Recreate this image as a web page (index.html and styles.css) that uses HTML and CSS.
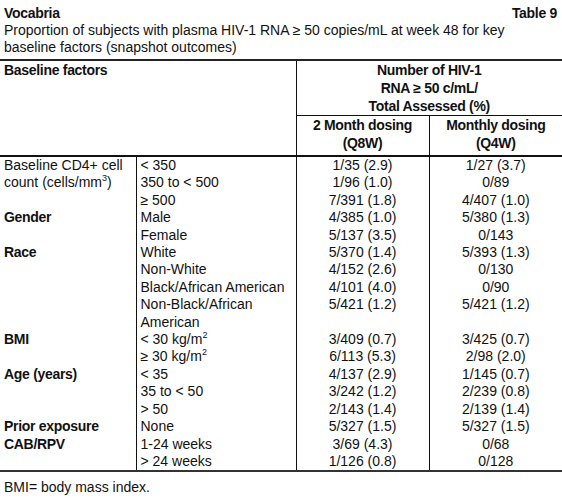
FILE: index.html
```html
<!DOCTYPE html>
<html>
<head>
    <meta charset="UTF-8">
    <link rel="stylesheet" href="styles.css">
</head>
<body>
    <div class="caption">
        <div class="caption-top">
            <span class="product">Vocabria</span>
            <span class="table-no">Table 9</span>
        </div>
        <div class="caption-text">Proportion of subjects with plasma HIV-1 RNA ≥ 50 copies/mL at week 48 for key<br>baseline factors (snapshot outcomes)</div>
    </div>

    <table class="results">
        <colgroup>
            <col class="c-factor">
            <col class="c-sub">
            <col class="c-q8w">
            <col class="c-q4w">
        </colgroup>
        <thead>
            <tr>
                <th colspan="2" rowspan="2" class="h-factor">Baseline factors</th>
                <th colspan="2" class="h-group">Number of HIV-1<br>RNA ≥ 50 c/mL/<br>Total Assessed (%)</th>
            </tr>
            <tr>
                <th class="h-arm">2 Month dosing<br>(Q8W)</th>
                <th class="h-arm">Monthly dosing<br>(Q4W)</th>
            </tr>
        </thead>
        <tbody>
            <tr>
                <td class="factor plain" rowspan="3">Baseline CD4+ cell<br>count (cells/mm<sup>3</sup>)</td>
                <td class="sub">&lt; 350</td>
                <td class="val">1/35 (2.9)</td>
                <td class="val">1/27 (3.7)</td>
            </tr>
            <tr>
                <td class="sub">350 to &lt; 500</td>
                <td class="val">1/96 (1.0)</td>
                <td class="val">0/89</td>
            </tr>
            <tr>
                <td class="sub">≥ 500</td>
                <td class="val">7/391 (1.8)</td>
                <td class="val">4/407 (1.0)</td>
            </tr>

            <tr>
                <td class="factor" rowspan="2">Gender</td>
                <td class="sub">Male</td>
                <td class="val">4/385 (1.0)</td>
                <td class="val">5/380 (1.3)</td>
            </tr>
            <tr>
                <td class="sub">Female</td>
                <td class="val">5/137 (3.5)</td>
                <td class="val">0/143</td>
            </tr>

            <tr>
                <td class="factor" rowspan="4">Race</td>
                <td class="sub">White</td>
                <td class="val">5/370 (1.4)</td>
                <td class="val">5/393 (1.3)</td>
            </tr>
            <tr>
                <td class="sub">Non-White</td>
                <td class="val">4/152 (2.6)</td>
                <td class="val">0/130</td>
            </tr>
            <tr>
                <td class="sub">Black/African American</td>
                <td class="val">4/101 (4.0)</td>
                <td class="val">0/90</td>
            </tr>
            <tr>
                <td class="sub">Non-Black/African<br>American</td>
                <td class="val">5/421 (1.2)<br>&nbsp;</td>
                <td class="val">5/421 (1.2)<br>&nbsp;</td>
            </tr>

            <tr>
                <td class="factor" rowspan="2">BMI</td>
                <td class="sub">&lt; 30 kg/m<sup>2</sup></td>
                <td class="val">3/409 (0.7)</td>
                <td class="val">3/425 (0.7)</td>
            </tr>
            <tr>
                <td class="sub">≥ 30 kg/m<sup>2</sup></td>
                <td class="val">6/113 (5.3)</td>
                <td class="val">2/98 (2.0)</td>
            </tr>

            <tr>
                <td class="factor" rowspan="3">Age (years)</td>
                <td class="sub">&lt; 35</td>
                <td class="val">4/137 (2.9)</td>
                <td class="val">1/145 (0.7)</td>
            </tr>
            <tr>
                <td class="sub">35 to &lt; 50</td>
                <td class="val">3/242 (1.2)</td>
                <td class="val">2/239 (0.8)</td>
            </tr>
            <tr>
                <td class="sub">&gt; 50</td>
                <td class="val">2/143 (1.4)</td>
                <td class="val">2/139 (1.4)</td>
            </tr>

            <tr>
                <td class="factor" rowspan="3">Prior exposure<br>CAB/RPV</td>
                <td class="sub">None</td>
                <td class="val">5/327 (1.5)</td>
                <td class="val">5/327 (1.5)</td>
            </tr>
            <tr>
                <td class="sub">1-24 weeks</td>
                <td class="val">3/69 (4.3)</td>
                <td class="val">0/68</td>
            </tr>
            <tr>
                <td class="sub">&gt; 24 weeks</td>
                <td class="val">1/126 (0.8)</td>
                <td class="val">0/128</td>
            </tr>
        </tbody>
    </table>

    <div class="footnote">BMI= body mass index.</div>
</body>
</html>
```

FILE: styles.css
```css
body {
    margin: 0;
    background: #fff;
    color: #111;
    font-family: "Liberation Sans", Arial, sans-serif;
    font-size: 14px;
}
.caption {
    padding: 5px 5px 0 4px;
    line-height: 17px;
}
.caption-top {
    display: flex;
    justify-content: space-between;
    font-weight: bold;
    letter-spacing: -0.3px;
}
.results {
    width: 562px;
    margin-top: 3px;
    border-collapse: collapse;
    table-layout: fixed;
}
.c-factor { width: 136px; }
.c-sub { width: 160px; }
.c-q8w { width: 133px; }
.c-q4w { width: 133px; }
.results th,
.results td {
    padding: 0 4px;
    vertical-align: top;
    font-weight: normal;
    white-space: nowrap;
}
.results thead th {
    font-weight: bold;
    letter-spacing: -0.3px;
    line-height: 18px;
    border-top: 2px solid #222;
    border-bottom: 1px solid #111;
}
.h-factor {
    text-align: left;
    border-bottom: 2px solid #111 !important;
}
.h-group {
    text-align: center;
    border-left: 1px solid #111;
}
.h-arm {
    text-align: center;
    padding-bottom: 3px !important;
    border-top: 1px solid #111 !important;
    border-left: 1px solid #111;
    border-bottom: 2px solid #111 !important;
}
.results tbody {
    border-bottom: 2px solid #333;
}
.results tbody td {
    line-height: 17.4px;
}
.factor {
    font-weight: bold !important;
    letter-spacing: -0.3px;
}
.factor.plain {
    font-weight: normal !important;
    letter-spacing: 0;
}
.sub {
    border-left: 1px solid #111;
}
.val {
    text-align: center;
    border-left: 1px solid #111;
}
sup {
    font-size: 9px;
    line-height: 0;
}
.footnote {
    padding: 7px 4px;
    line-height: 17px;
}
```
